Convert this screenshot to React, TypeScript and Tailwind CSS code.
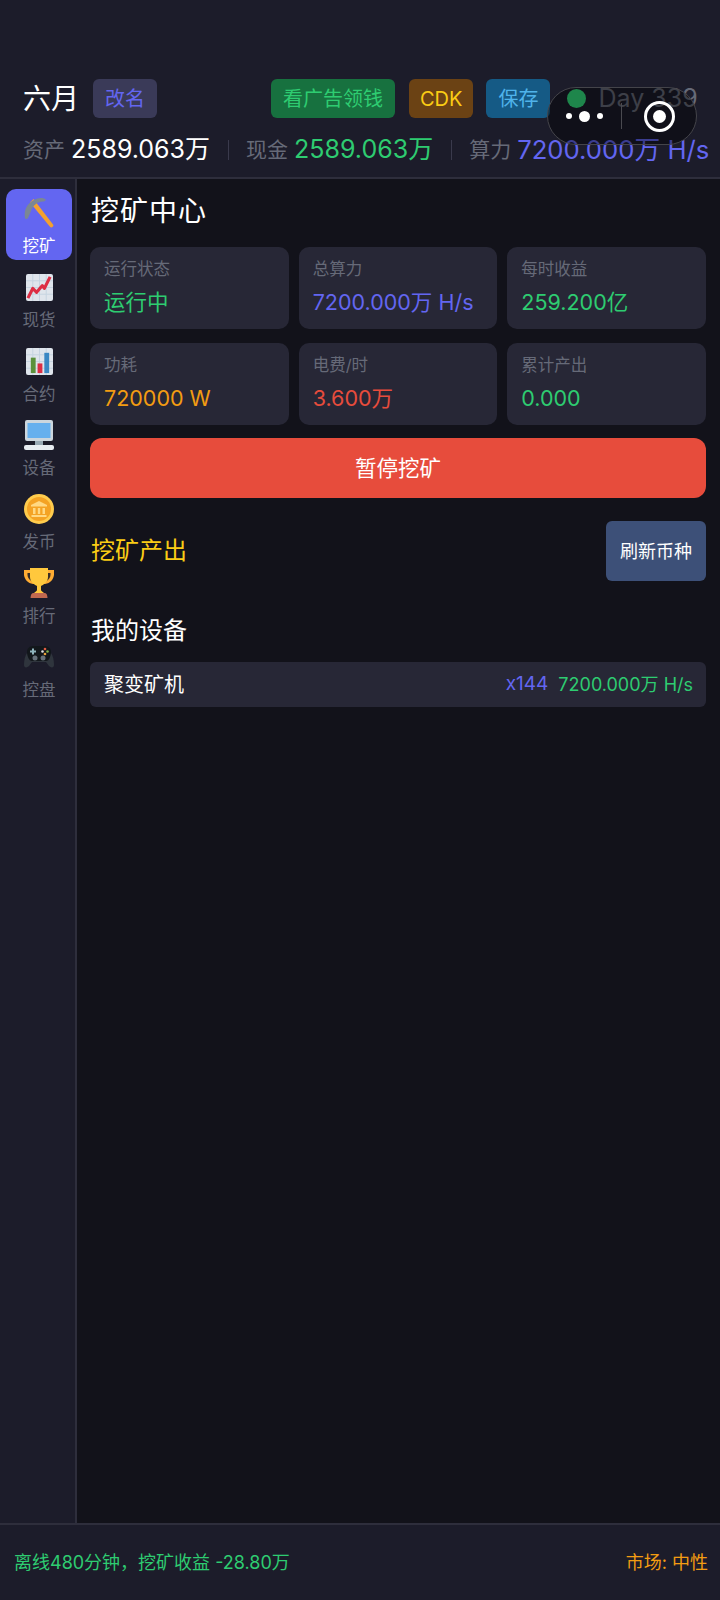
import type { ReactNode } from 'react';

const PickIcon = () => (
  <svg viewBox="0 0 30 30" className="w-[30px] h-[30px]">
    <path d="M6 4.500L9.500 1l19.700 25.800c.8 1.700-1.600 3.500-3 2.200z" fill="#f4a12e" />
    <path d="M1 20C-1 10 6 1 17 0c2 0 4 .5 5 2l-2 1.500C14 3 9 7 7 13l-3 7c-1 1.300-2.700 1.200-3 0z" fill="#7b8794" />
  </svg>
);

const ChartUpIcon = () => (
  <svg viewBox="0 0 28 28" className="w-[27px] h-[27px]">
    <rect width="28" height="28" rx="2" fill="#dfe5ec" />
    <path d="M0 7h28M0 14h28M0 21h28M7 0v28M14 0v28M21 0v28" stroke="#c6d3e0" strokeWidth="1" />
    <path d="M2 25l5-10 4 4 6-7 2 3 6-12" fill="none" stroke="#dd2e44" strokeWidth="3.200" strokeLinejoin="round" />
  </svg>
);

const BarsIcon = () => (
  <svg viewBox="0 0 28 28" className="w-[27px] h-[27px]">
    <rect width="28" height="28" rx="2" fill="#dfe5ec" />
    <path d="M0 7h28M0 14h28M0 21h28M7 0v28M14 0v28M21 0v28" stroke="#c6d3e0" strokeWidth="1" />
    <rect x="5" y="10" width="5" height="16" fill="#5c913b" />
    <rect x="12" y="16" width="5" height="10" fill="#dd2e44" />
    <rect x="19" y="5" width="5" height="21" fill="#3b88c3" />
  </svg>
);

const ComputerIcon = () => (
  <svg viewBox="0 0 30 30" className="w-[30px] h-[30px]">
    <rect x="1" y="0" width="28" height="21" rx="2" fill="#ccd6dd" />
    <rect x="3.500" y="3" width="23" height="15" fill="#66b0ee" />
    <rect x="11" y="21" width="8" height="4" fill="#99aab5" />
    <rect x="0" y="25" width="30" height="5" rx="2" fill="#e8edf2" />
  </svg>
);

const CoinIcon = () => (
  <svg viewBox="0 0 30 30" className="w-[30px] h-[30px]">
    <circle cx="15" cy="15" r="15" fill="#ffcc4d" />
    <circle cx="15" cy="15" r="12" fill="#f4a324" />
    <path d="M15 7l8 4v1.500H7V11zM9 14h2.500v6H9zM13.800 14h2.400v6h-2.400zM18.500 14H21v6h-2.500zM7.500 21h15v2h-15z" fill="#ffd983" />
  </svg>
);

const TrophyIcon = () => (
  <svg viewBox="0 0 30 30" className="w-[30px] h-[30px]">
    <path d="M0 2h30c1 7-2 13-9 14H9C2 15-1 9 0 2z" fill="#ffac33" />
    <path d="M3.500 5H8c0 4 1 6 2 9-4-1-7-4-6.500-9zM26.500 5H22c0 4-1 6-2 9 4-1 7-4 6.500-9z" fill="#3a2f26" />
    <path d="M6 0h18v9c0 5-5 8-7 9v4c0 1 2 2 3 3H10c1-1 3-2 3-3v-4c-2-1-7-4-7-9z" fill="#ffc83d" />
    <path d="M9 25h12c1.500 0 2.500 2.500 2.500 5h-17c0-2.500 1-5 2.500-5z" fill="#c1694f" />
  </svg>
);

const GamepadIcon = () => (
  <svg viewBox="0 0 30 22" className="w-[30px] h-[22px]">
    <path d="M0 19c0-5 1-9 3-12h24c2 3 3 7 3 12 0 3-3 3-5 1l-3-4H8l-3 4c-2 2-5 2-5-1z" fill="#2f353d" />
    <path d="M3 6c0-4 3-6 7-6h10c4 0 7 2 7 6 0 4-2 9-5 9H8C5 15 3 10 3 6z" fill="#12171b" />
    <path d="M8 2.500h2v2h2v2h-2v2H8v-2H6v-2h2z" fill="#8fb4bd" />
    <circle cx="21" cy="3" r="1.300" fill="#dd5a44" />
    <circle cx="18.500" cy="5.500" r="1.300" fill="#e0e0e0" />
    <circle cx="23.500" cy="5.500" r="1.300" fill="#7fb04f" />
    <circle cx="21" cy="8" r="1.300" fill="#e8a23a" />
    <circle cx="11" cy="12" r="2.500" fill="#66707a" />
    <circle cx="19" cy="12" r="2.500" fill="#66707a" />
  </svg>
);

function NavItem({ icon, label, active }: { icon: ReactNode; label: string; active?: boolean }) {
  return (
    <div
      className={`w-[66px] h-[71px] flex flex-col items-center rounded-[10px] ${
        active ? 'bg-[#6366f1] text-white' : 'text-[#666a78]'
      }`}
    >
      <div className="h-[46px] flex items-center justify-center pt-[2px]">{icon}</div>
      <div className="text-[16.500px] leading-[22px]">{label}</div>
    </div>
  );
}

function Stat({ label, value, color }: { label: string; value: string; color: string }) {
  return (
    <div className="h-[82px] bg-[#272736] rounded-[10px] pl-[14px] pt-[10px]">
      <div className="text-[16.500px] leading-[24px] text-[#666a78]">{label}</div>
      <div className={`text-[21.500px] leading-[32px] mt-[5px] whitespace-nowrap ${color}`}>{value}</div>
    </div>
  );
}

function HeaderBtn({ className, children }: { className: string; children: ReactNode }) {
  return (
    <div className={`h-[39px] w-max px-[12px] rounded-[6px] flex items-center text-[20px] ${className}`}>{children}</div>
  );
}

function Sep() {
  return <span className="w-px h-[20px] shrink-0 bg-[#3a3a4c] ml-[18px]" />;
}

export default function App() {
  return (
    <div className="relative w-[720px] h-[1600px] flex flex-col overflow-hidden bg-[#12121a] text-white font-['Inter','Noto_Sans_CJK_SC',sans-serif]">
      <header className="h-[179px] shrink-0 bg-[#1c1c2a] border-b-2 border-[#2e2e3c] pt-[79px] pl-[23px]">
        <div className="flex items-center h-[39px]">
          <div className="text-[28px] w-[70px]">六月</div>
          <HeaderBtn className="bg-[#3a3a58] text-[#6366f1]">改名</HeaderBtn>
          <HeaderBtn className="bg-[#17713f] text-[#2ecc71] ml-[114px]">看广告领钱</HeaderBtn>
          <HeaderBtn className="bg-[#6b4214] text-[#facc15] ml-[14px] !px-[11px]">CDK</HeaderBtn>
          <HeaderBtn className="bg-[#155a85] text-[#4fb3ea] ml-[13px]">保存</HeaderBtn>
          <div className="w-[19px] h-[19px] shrink-0 rounded-full bg-[#33e07e] ml-[17px] -mt-[1px]" />
          <div className="text-[25px] text-[#666a78] ml-[12px] whitespace-nowrap">Day 339</div>
        </div>
        <div className="flex items-center h-[34px] mt-[15px] whitespace-nowrap">
          <span className="text-[21px] text-[#666a78]">资产</span>
          <span className="text-[25px] ml-[6px]">2589.063万</span>
          <Sep />
          <span className="text-[21px] text-[#666a78] ml-[17px]">现金</span>
          <span className="text-[25px] text-[#2ecc71] ml-[6px]">2589.063万</span>
          <Sep />
          <span className="text-[21px] text-[#666a78] ml-[17px]">算力</span>
          <span className="text-[25.700px] text-[#6366f1] ml-[6px]">7200.000万 H/s</span>
        </div>
      </header>

      <div className="flex-1 flex min-h-0">
        <aside className="w-[77px] shrink-0 bg-[#1c1c2a] border-r-2 border-[#2e2e3c] pt-[10px] pl-[6px] flex flex-col gap-[3px]">
          <NavItem icon={<PickIcon />} label="挖矿" active />
          <NavItem icon={<ChartUpIcon />} label="现货" />
          <NavItem icon={<BarsIcon />} label="合约" />
          <NavItem icon={<ComputerIcon />} label="设备" />
          <NavItem icon={<CoinIcon />} label="发币" />
          <NavItem icon={<TrophyIcon />} label="排行" />
          <NavItem icon={<GamepadIcon />} label="控盘" />
        </aside>

        <main className="flex-1 pl-[13px] pr-[14px]">
          <h2 className="text-[28px] tracking-[1px] leading-[40px] mt-[12px] ml-px">挖矿中心</h2>
          <div className="grid grid-cols-3 gap-x-[10px] gap-y-[14px] mt-[16px]">
            <Stat label="运行状态" value="运行中" color="text-[#2ecc71]" />
            <Stat label="总算力" value="7200.000万 H/s" color="text-[#6366f1]" />
            <Stat label="每时收益" value="259.200亿" color="text-[#2ecc71]" />
            <Stat label="功耗" value="720000 W" color="text-[#f39c12]" />
            <Stat label="电费/时" value="3.600万" color="text-[#e74c3c]" />
            <Stat label="累计产出" value="0.000" color="text-[#2ecc71]" />
          </div>
          <div className="h-[60px] mt-[13px] bg-[#e74c3c] rounded-[12px] flex items-center justify-center text-[21.500px]">
            暂停挖矿
          </div>
          <div className="flex items-center justify-between mt-[23px]">
            <div className="text-[24px] text-[#facc15] ml-px">挖矿产出</div>
            <div className="h-[60px] w-[100px] bg-[#3d5078] rounded-[6px] flex items-center justify-center text-[18px] whitespace-nowrap">
              刷新币种
            </div>
          </div>
          <div className="text-[24px] leading-[34px] mt-[33px] ml-px">我的设备</div>
          <div className="h-[45px] mt-[14px] bg-[#272736] rounded-[6px] pl-[14px] pr-[13px] flex items-center justify-between">
            <span className="text-[20px]">聚变矿机</span>
            <span className="flex items-center gap-[10px]">
              <span className="text-[19px] text-[#6366f1]">x144</span>
              <span className="text-[18px] text-[#2ecc71]">7200.000万 H/s</span>
            </span>
          </div>
        </main>
      </div>

      <footer className="h-[77px] shrink-0 bg-[#1c1c2a] border-t-2 border-[#2e2e3c] flex items-center justify-between pl-[14px] pr-[12px] text-[18px]">
        <span className="text-[#2ecc71]">离线480分钟，挖矿收益 -28.80万</span>
        <span className="text-[#f39c12]">市场: 中性</span>
      </footer>

      {/* mini program capsule */}
      <div className="absolute left-[547px] top-[87px] w-[150px] h-[58px] rounded-full bg-black/40 border border-[#44444a] flex items-center">
        <div className="w-[73px] flex items-center justify-center gap-[7px]">
          <span className="w-[6px] h-[6px] rounded-full bg-white" />
          <span className="w-[11px] h-[11px] rounded-full bg-white" />
          <span className="w-[6px] h-[6px] rounded-full bg-white" />
        </div>
        <span className="w-px h-[26px] bg-[#4a4a50]" />
        <div className="flex-1 flex items-center justify-center">
          <span className="w-[31px] h-[31px] rounded-full border-[3.500px] border-white flex items-center justify-center">
            <span className="w-[13px] h-[13px] rounded-full bg-white" />
          </span>
        </div>
      </div>
    </div>
  );
}
